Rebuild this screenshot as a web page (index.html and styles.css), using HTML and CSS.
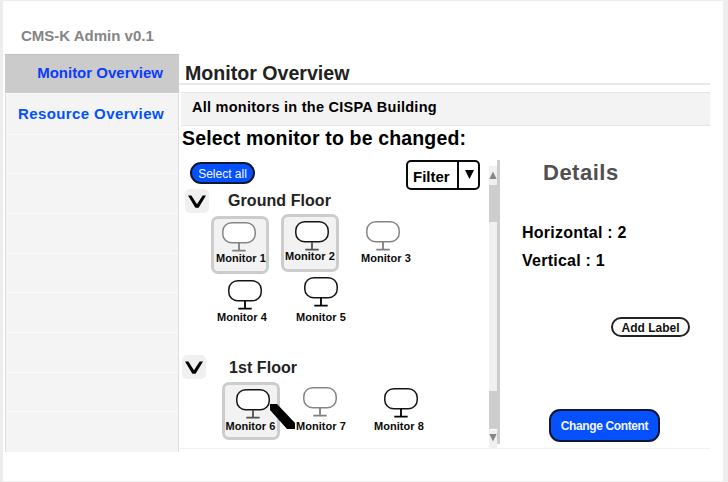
FILE: index.html
```html
<!DOCTYPE html>
<html lang="en">
<head>
<meta charset="utf-8">
<title>CMS-K Admin</title>
<link rel="stylesheet" href="styles.css">
</head>
<body>
<svg class="defs" aria-hidden="true">
  <symbol id="monitor" viewBox="0 0 34 30">
    <rect class="screen" x="0.8" y="0.8" width="32.4" height="20" rx="9" ry="8.6"/>
    <path class="stand" d="M17 21v7M10.3 28.7h13.4"/>
  </symbol>
</svg>
<div class="page">
  <header class="brand">CMS-K Admin v0.1</header>
  <div class="columns">
    <nav class="sidebar">
      <a class="nav-item active">Monitor Overview</a>
      <a class="nav-item resource">Resource Overview</a>
      <div class="nav-item"></div><div class="nav-item"></div><div class="nav-item"></div>
      <div class="nav-item"></div><div class="nav-item"></div><div class="nav-item"></div>
      <div class="nav-item"></div><div class="nav-item"></div>
    </nav>
    <main class="main">
      <h1 class="title">Monitor Overview</h1>
      <div class="notice"><span>All monitors in the CISPA Building</span></div>
      <h2 class="prompt"><span>Select monitor to be changed:</span></h2>
      <div class="workspace">
        <section class="list">
          <div class="toolbar">
            <button class="select-all">Select all</button>
            <div class="filter"><span class="filter-label">Filter</span><span class="filter-arrow"><svg width="9" height="9" viewBox="0 0 9 9"><path d="M0 0h9L4.5 9z"/></svg></span></div>
          </div>
          <div class="floor ground">
            <button class="toggle"><svg width="24" height="24" viewBox="0 0 24 24"><path d="M3 6.5h3.4L12 15.3l5.6-8.8H21L13.6 18.8h-3.2z"/></svg></button>
            <h3>Ground Floor</h3>
          </div>
          <div class="tiles row-a">
            <div class="tile m1 selected dim"><svg class="icon"><use href="#monitor"/></svg><span>Monitor 1</span></div>
            <div class="tile m2 selected soft"><svg class="icon"><use href="#monitor"/></svg><span>Monitor 2</span></div>
            <div class="tile m3 dim"><svg class="icon"><use href="#monitor"/></svg><span>Monitor 3</span></div>
          </div>
          <div class="tiles row-b">
            <div class="tile m4"><svg class="icon"><use href="#monitor"/></svg><span>Monitor 4</span></div>
            <div class="tile m5"><svg class="icon"><use href="#monitor"/></svg><span>Monitor 5</span></div>
          </div>
          <div class="floor first">
            <button class="toggle"><svg width="24" height="24" viewBox="0 0 24 24"><path d="M3 6.5h3.4L12 15.3l5.6-8.8H21L13.6 18.8h-3.2z"/></svg></button>
            <h3>1st Floor</h3>
          </div>
          <div class="tiles row-c">
            <div class="tile m6 selected soft"><svg class="icon"><use href="#monitor"/></svg><span>Monitor 6</span>
              <svg class="cursor" width="26" height="26" viewBox="0 0 26 26"><path d="M0 0h7l18 19v6h-8L0 6z"/></svg>
            </div>
            <div class="tile m7 dim"><svg class="icon"><use href="#monitor"/></svg><span>Monitor 7</span></div>
            <div class="tile m8"><svg class="icon"><use href="#monitor"/></svg><span>Monitor 8</span></div>
          </div>
        </section>
        <div class="scrollbar">
          <div class="step up"><svg width="8" height="8" viewBox="0 0 8 8"><path d="M0.4 8h7.2L4 0.5z"/></svg></div>
          <div class="thumb"></div>
          <div class="track"></div>
          <div class="thumb lower"></div>
          <div class="step down"><svg width="8" height="8" viewBox="0 0 8 8"><path d="M0.4 0h7.2L4 7.5z"/></svg></div>
        </div>
        <div class="divider"></div>
        <aside class="details">
          <h2><span>Details</span></h2>
          <p class="horizontal">Horizontal : 2</p>
          <p class="vertical">Vertical : 1</p>
          <button class="add-label">Add Label</button>
          <button class="change">Change Content</button>
        </aside>
      </div>
    </main>
  </div>
</div>
</body>
</html>
```
FILE: styles.css
```css
* { box-sizing: border-box; }
body { margin: 0; width: 728px; height: 482px; overflow: hidden; background: #ededed; padding: 1px 5px 0 3px; font-family: "Liberation Sans", Arial, sans-serif; font-weight: bold; color: #000; }
h1, h2, h3, p { margin: 0; font-weight: bold; white-space: nowrap; }
button { font: inherit; padding: 0; margin: 0; white-space: nowrap; display: block; }
svg { display: block; }
.defs { width: 0; height: 0; position: absolute; }
.page { height: 480px; background: #fff; }
.brand { height: 53px; padding: 26px 0 0 18px; font-size: 15px; line-height: 18px; color: #858585; }
.columns { display: flex; padding-left: 2px; }

.sidebar { width: 174px; height: 398px; display: grid; grid-template-rows: repeat(10, 1fr); border: solid #dedede; border-width: 0 1px; background: #f4f4f4; }
.nav-item { border-bottom: 1px solid #fbfbfb; font-size: 15px; line-height: 38px; text-align: right; padding-right: 15px; color: #0a3cff; white-space: nowrap; }
.nav-item:last-child { border-bottom: 0; }
.active { background: #cbcbcb; margin: 0 -1px; padding-right: 16px; border-top: 1px solid #bfbfbf; line-height: 36px; }
.resource { color: #0051ff; letter-spacing: 0.4px; padding-right: 14px; line-height: 40px; }

.main { width: 531px; height: 395px; border-bottom: 1px solid #f0f0f0; }
.title { height: 31px; padding: 7px 0 0 6px; font-size: 19.6px; line-height: 24px; color: #222; border-bottom: 2px solid #e9e9e9; }
.notice { margin: 7px 0 0 2px; height: 34px; padding-left: 11px; background: #f3f3f3; border: solid #e6e6e6; border-width: 1px 0; font-size: 14.5px; line-height: 28px; letter-spacing: 0.26px; }
.prompt { height: 34px; padding-left: 3px; font-size: 19.5px; line-height: 24px; letter-spacing: 0.16px; }
.workspace { display: flex; height: 288px; }

.list { width: 310px; }
.toolbar { display: flex; justify-content: space-between; height: 29px; padding-left: 11px; margin-right: 9px; }
.select-all { width: 65px; height: 22px; margin-top: 2px; border: 2px solid #101830; border-radius: 11px; background: #0550ff; color: #f4f8ff; font-size: 12px; font-weight: normal; line-height: 20px; }
.filter { width: 74px; height: 30px; border: 2px solid #0a0a0a; border-radius: 5px; display: flex; background: #fff; }
.filter-label { width: 49px; padding-left: 5px; font-size: 15px; line-height: 29px; }
.filter-arrow { flex: 1; border-left: 2px solid #0a0a0a; padding: 8px 0 0 6px; }
.floor { display: flex; height: 25px; }
.floor h3 { font-size: 16px; line-height: 24px; letter-spacing: 0.06px; color: #222; }
.toggle { width: 24px; height: 24px; border: 0; border-radius: 5px; background: #f0f0f0; }
.ground { padding-left: 6px; }
.ground h3 { margin-left: 19px; }
.first { padding-left: 3px; margin-top: 21px; height: 27px; }
.first h3 { margin-left: 23px; line-height: 25px; }
.tiles { display: flex; }
.row-a { height: 61px; padding-left: 32px; }
.row-b { height: 59px; padding-left: 33px; }
.row-c { height: 58px; padding-left: 43px; }
.tile { flex: none; position: relative; width: 58px; height: 58px; padding-top: 3px; border: 3px solid transparent; border-radius: 7px; display: flex; flex-direction: column; align-items: center; }
.tile span { font-size: 11px; line-height: 12px; letter-spacing: 0.05px; white-space: nowrap; color: #0a0a0a; }
.tile .icon { flex: none; width: 34px; height: 30px; }
.selected { background: #f2f2f2; border-color: #ccc; }
.screen { fill: #fff; stroke: var(--frame, #151515); stroke-width: 1.5; }
.stand { fill: none; stroke: var(--foot, #000); stroke-width: 1.8; }
.dim { --frame: #858585; --foot: #808080; }
.soft { --foot: #505050; }
.m1 { margin-top: 2px; }
.m1 .icon { margin-left: -2px; }
.m1 span, .m4 span, .m5 span { margin-left: 2px; }
.m2 { margin-left: 12px; }
.m2 .icon { margin: 1px 0 -1px 4px; }
.m3 { margin: 1px 0 0 18px; }
.m3 .icon { margin: 0 7px 1px 0; }
.m4 .icon { margin: -1px 0 1px 7px; }
.m5 { margin-left: 21px; }
.m5 .icon { margin: -4px 0 4px 1px; }
.m6 .icon { margin: 1px 0 1px 4px; }
.m6 span { margin-left: -1px; }
.m7 { margin-left: 12px; }
.m7 .icon { margin: -1px 2px 3px 0; }
.m8 { margin-left: 20px; }
.m8 .icon { margin: 0 0 2px 4px; }
.m6 { z-index: 1; }
.cursor { position: absolute; left: 45px; top: 19px; }

.scrollbar { width: 8px; height: 282px; margin-top: 6px; background: #f0f0f0; display: flex; flex-direction: column; }
.step { height: 19px; fill: #858585; }
.up { padding-top: 5px; }
.down { padding-top: 4px; border-top: 1px solid #fff; }
.thumb { height: 37px; background: #cdcdcd; }
.track { flex: 1; }
.lower { height: 38px; }
.divider { width: 3px; height: 284px; background: #cdcdcd; }
.details { flex: 1; display: flex; flex-direction: column; }
.details h2 { height: 61px; padding-left: 43px; font-size: 22px; line-height: 25px; letter-spacing: 0.5px; color: #505050; }
.details p { padding-left: 22px; height: 28px; font-size: 16px; line-height: 24px; letter-spacing: 0.24px; }
.add-label { width: 79px; height: 20px; margin: 40px 0 0 111px; border: 2px solid #222; border-radius: 10px; background: #fff; color: #111; font-size: 12px; line-height: 18px; }
.change { width: 111px; height: 33px; margin: 72px 0 0 49px; border: 2px solid #101830; border-radius: 11px; background: #0550ff; color: #f0f6ff; font-size: 12px; line-height: 30px; letter-spacing: -0.38px; }
```
